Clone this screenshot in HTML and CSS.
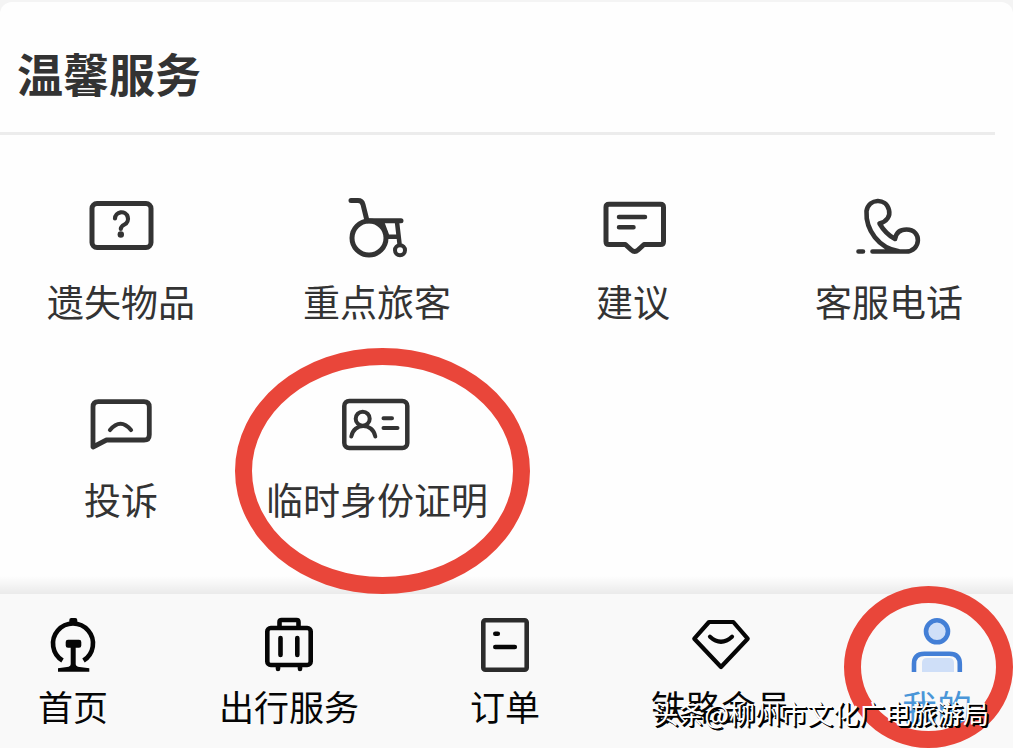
FILE: index.html
```html
<!DOCTYPE html>
<html lang="zh-CN">
<head>
<meta charset="utf-8">
<meta name="viewport" content="width=device-width, initial-scale=1">
<title>温馨服务</title>
<link rel="stylesheet" href="styles.css">
</head>
<body>
<div class="app">
  <main class="card">
    <h1 class="card-title">温馨服务</h1>
    <div class="services">
      <a class="service" href="#lost">
        <svg class="service-icon" viewBox="0 0 80 80" aria-hidden="true">
          <rect x="11" y="15.500" width="59" height="44" rx="5"/>
          <path stroke-width="4.200" d="M34 30.500a6.500 6.500 0 1 1 9.500 6c-2.800 1.500-3.700 2.500-3.700 4.500"/>
          <circle class="solid" cx="39.800" cy="46.500" r="3.200"/>
        </svg>
        <span class="service-label">遗失物品</span>
      </a>
      <a class="service" href="#priority">
        <svg class="service-icon" viewBox="0 0 80 80" aria-hidden="true">
          <path d="M14 12.500h7q4 0 5 4l4 16.200h34"/>
          <circle cx="32" cy="50" r="17"/>
          <path stroke-width="4.500" d="M45 34l5.500 14.700H61M60 34l2.500 21.500"/>
          <circle stroke-width="4" cx="63" cy="62.300" r="5"/>
        </svg>
        <span class="service-label">重点旅客</span>
      </a>
      <a class="service" href="#suggest">
        <svg class="service-icon" viewBox="0 0 80 80" aria-hidden="true">
          <path d="M16 16.300H67.500q3 0 3 3V53.500q0 3-3 3H51l-6 5.500q-3.300 3-6.600 0l-6-5.500H16q-3 0-3-3V19.300q0-3 3-3z"/>
          <path stroke-width="4.500" d="M26 29h26M26 39.300h14.500"/>
        </svg>
        <span class="service-label">建议</span>
      </a>
      <a class="service" href="#phone">
        <svg class="service-icon" viewBox="0 0 80 80" aria-hidden="true">
          <path stroke-width="4.600" d="M9.500 63.500H14M23.500 63.500H57C72 63.500 73.500 41.500 57.500 41.500C51 41.500 47 45 46 51C39.500 47.500 34 41.500 30.500 35.500C38 33.500 41.500 28 40 22C37 9.500 20 10 17.500 23C16.500 42 30 60.500 50 63.300"/>
        </svg>
        <span class="service-label">客服电话</span>
      </a>
      <a class="service" href="#complain">
        <svg class="service-icon" viewBox="0 0 80 80" aria-hidden="true">
          <path stroke-width="4.800" d="M12 61V21q0-5.300 5.300-5.300H63q5.300 0 5.300 5.300V48.700q0 5.300-5.300 5.300H25.500z"/>
          <path stroke-width="4.200" d="M29 44q10.500-12.500 21 0"/>
        </svg>
        <span class="service-label">投诉</span>
      </a>
      <a class="service" href="#identity">
        <svg class="service-icon" viewBox="0 0 80 80" aria-hidden="true">
          <rect stroke-width="4.500" x="7.300" y="15" width="63" height="47" rx="5"/>
          <g stroke-width="4">
            <circle cx="25.700" cy="32.700" r="7"/>
            <path d="M14.300 50.500c2.500-14 21.500-14 24 0M46.500 32.300h8.500M46.500 42h14"/>
          </g>
        </svg>
        <span class="service-label">临时身份证明</span>
        <span class="ring ring-service"></span>
      </a>
    </div>
  </main>
  <nav class="tabs">
    <a class="tab" href="#home">
      <svg class="tab-icon" viewBox="0 0 64 64" aria-hidden="true">
        <path stroke-linecap="butt" d="M21.500 46.500A20 20 0 1 1 42.500 46.500"/>
        <path class="solid" d="M28.300 9V6q0-2 2-2h4q2 0 2 2v3zM27 25.700h11q2.300 0 2.300 2.300v3.500q0 2.300-2.300 2.300h-3.300V50q0 2.500 4 3l9.600 1.200v3.600H17v-3.600l9-1.200q3.700-.5 3.700-3V33.800H27q-2.300 0-2.300-2.300V28q0-2.300 2.300-2.300z"/>
      </svg>
      <span class="tab-label">首页</span>
    </a>
    <a class="tab" href="#travel">
      <svg class="tab-icon" viewBox="0 0 64 64" aria-hidden="true">
        <rect x="10.300" y="14" width="43.400" height="37" rx="3.500"/>
        <path d="M22.500 13V8q0-2 2-2h15q2 0 2 2v5M23.500 24v17M40.300 24v17M21 52v3M43 52v3"/>
      </svg>
      <span class="tab-label">出行服务</span>
    </a>
    <a class="tab" href="#orders">
      <svg class="tab-icon" viewBox="0 0 64 64" aria-hidden="true">
        <rect class="sheet" x="10.300" y="6.300" width="43.400" height="49.400" rx="2"/>
        <path d="M22.300 19.700h2.500M22.300 33h19.500"/>
      </svg>
      <span class="tab-label">订单</span>
    </a>
    <a class="tab" href="#member">
      <svg class="tab-icon" viewBox="0 0 64 64" aria-hidden="true">
        <path stroke-width="4.200" d="M20 8h24.300L58.700 24.700 32 53 5.300 24.700zM21 22.700q11 10 22 0"/>
      </svg>
      <span class="tab-label">铁路会员</span>
    </a>
    <a class="tab tab-active" href="#mine" aria-current="page">
      <svg class="tab-icon" viewBox="0 0 64 64" aria-hidden="true">
        <circle class="tint" cx="32" cy="17.300" r="11"/>
        <path class="tint-only" d="M17 58V49q0-5 5-5H44q5 0 5 5v9z"/>
        <path stroke-linecap="butt" d="M9 58V50q0-10.300 10.300-10.300H44.500q10.300 0 10.300 10.300v8"/>
      </svg>
      <span class="tab-label">我的</span>
      <span class="ring ring-tab"></span>
    </a>
  </nav>
  <p class="watermark">头条@柳州市文化广电旅游局</p>
</div>
</body>
</html>
```
FILE: styles.css
```css
* {
  box-sizing: border-box;
}

body {
  margin: 0;
  background: #f4f4f4;
  color: #333;
  font-family: "Noto Sans CJK SC", "Noto Sans", sans-serif;
}

a {
  color: inherit;
  text-decoration: none;
}

.app {
  position: relative;
  display: flex;
  flex-direction: column;
  min-height: 100vh;
  padding-top: 2px;
  overflow: hidden;
}

.card {
  flex: 1;
  background: #fefefe;
  border-radius: 12px 12px 0 0;
}

.card-title {
  margin: 0 18px 0 0;
  padding: 40px 0 30px 17px;
  border-bottom: 3px solid #ececec;
  color: #333;
  font-size: 46px;
  font-weight: 700;
  line-height: 60px;
}

.services {
  display: grid;
  grid-template-columns: repeat(4, 1fr);
  row-gap: 60px;
  margin: 0 -4px 0 -7px;
  padding: 53px 0 68px;
}

.service,
.tab {
  position: relative;
  display: flex;
  flex-direction: column;
  align-items: center;
}

.service {
  gap: 8px;
}

.service-icon,
.tab-icon {
  fill: none;
  stroke: currentColor;
  stroke-linecap: round;
  stroke-linejoin: round;
}

.service-icon {
  width: 80px;
  height: 80px;
  stroke-width: 5;
}

.solid {
  fill: currentColor;
  stroke: none;
}

.service-label {
  font-size: 37px;
  line-height: 50px;
  white-space: nowrap;
}

.tabs {
  position: relative;
  display: grid;
  grid-template-columns: repeat(5, 1fr);
  padding: 20px 0 17px;
  margin: 0 -32px 0 -35px;
  background: #f9f9f9;
  color: #060606;
}

.tabs::before {
  content: "";
  position: absolute;
  right: 0;
  bottom: 100%;
  left: 0;
  height: 18px;
  background: linear-gradient(rgba(0, 0, 0, 0), rgba(0, 0, 0, 0.08));
}

.tab {
  gap: 3px;
}

.tab-icon {
  width: 64px;
  height: 64px;
  stroke-width: 4.600;
}

.sheet {
  stroke: #2c2c2c;
}

.tab-label {
  font-size: 35px;
  line-height: 50px;
  white-space: nowrap;
}

.tab-active .tab-icon {
  color: #437fd6;
}

.tab-active .tab-label {
  color: #4a96d8;
}

.tint,
.tint-only {
  fill: #cfdff8;
}

.tint-only {
  stroke: none;
}

.ring {
  position: absolute;
  border: 17px solid #e9463a;
  border-radius: 50%;
}

.ring-service {
  top: -38px;
  left: -14px;
  z-index: 1;
  width: 295px;
  height: 246px;
}

.ring-tab {
  top: -28px;
  left: 15px;
  width: 169px;
  height: 162px;
}

.watermark {
  position: absolute;
  right: 24px;
  bottom: 17px;
  margin: 0;
  color: #fff;
  font-size: 26px;
  line-height: 36px;
  text-shadow: 1px 1px 0 #000, 2px 2px 0 #000;
  white-space: nowrap;
}
```
